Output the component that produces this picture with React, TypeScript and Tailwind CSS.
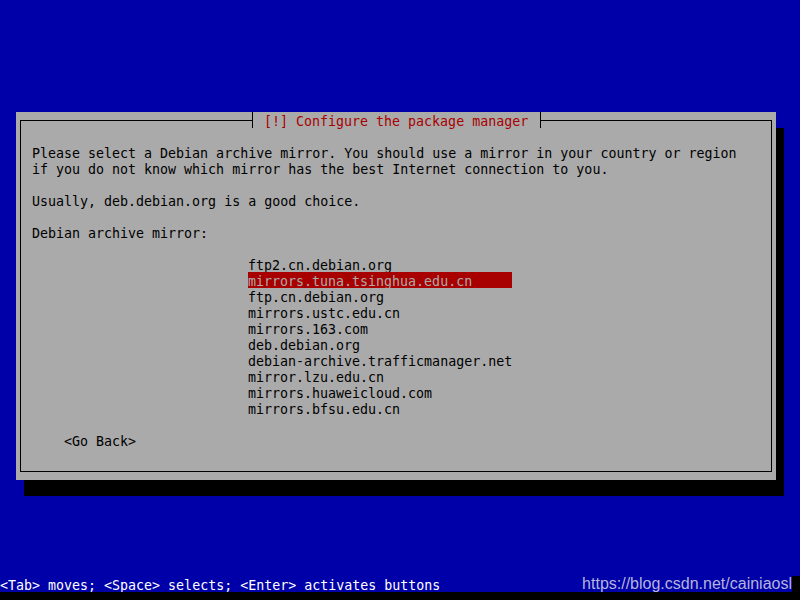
import React from 'react'

const mirrors = [
  'ftp2.cn.debian.org',
  'mirrors.tuna.tsinghua.edu.cn',
  'ftp.cn.debian.org',
  'mirrors.ustc.edu.cn',
  'mirrors.163.com',
  'deb.debian.org',
  'debian-archive.trafficmanager.net',
  'mirror.lzu.edu.cn',
  'mirrors.huaweicloud.com',
  'mirrors.bfsu.edu.cn',
]

const selected = 1

const App: React.FC = () => {
  return (
    <div className="flex h-[600px] w-[800px] flex-col bg-[#0000a8] font-['DejaVu_Sans_Mono',monospace] text-[13.3px] leading-4">
      <div className="h-[112px] shrink-0" />

      {/* dialog */}
      <div className="ml-4 h-[368px] w-[760px] shrink-0 bg-[#aaaaaa] px-1 py-2 shadow-[8px_16px_0_0_#000]">
        <div className="h-full border border-black">
          <div className="-mt-[9px] ml-[231px] h-4 w-[289px] whitespace-pre border-x border-black bg-[#aaaaaa] pl-[11px] pt-[2px] text-[#a80000]">
            [!] Configure the package manager
          </div>

          <div className="mt-4 whitespace-pre pl-[11px] text-black">
            <div className="h-4 pt-[2px]">
              Please select a Debian archive mirror. You should use a mirror in your country or region
            </div>
            <div className="h-4 pt-[2px]">
              if you do not know which mirror has the best Internet connection to you.
            </div>
            <div className="h-4" />
            <div className="h-4 pt-[2px]">Usually, deb.debian.org is a good choice.</div>
            <div className="h-4" />
            <div className="h-4 pt-[2px]">Debian archive mirror:</div>
            <div className="h-4" />

            <div className="ml-[216px] flex flex-col">
              {mirrors.map((m, i) => (
                <div
                  key={m}
                  className={
                    i === selected
                      ? 'h-4 w-[264px] bg-[#a80000] pt-[2px] text-[#aaaaaa]'
                      : 'h-4 w-[264px] pt-[2px]'
                  }
                >
                  {m}
                </div>
              ))}
            </div>

            <div className="h-4" />
            <div className="ml-8 h-4 pt-[2px]">&lt;Go Back&gt;</div>
          </div>
        </div>
      </div>

      {/* help line */}
      <div className="mt-auto flex h-4 shrink-0 items-stretch">
        <div className="flex-1 whitespace-pre pt-[2px] text-white">
          &lt;Tab&gt; moves; &lt;Space&gt; selects; &lt;Enter&gt; activates buttons
        </div>
        <div className="font-['Liberation_Sans',Arial,sans-serif] text-[16px] leading-4 text-[#b4b4dc]">
          https://blog.csdn.net/cainiaosl
        </div>
        <div className="w-2 bg-black" />
      </div>
      <div className="h-2 shrink-0 bg-black" />
    </div>
  )
}

export default App
